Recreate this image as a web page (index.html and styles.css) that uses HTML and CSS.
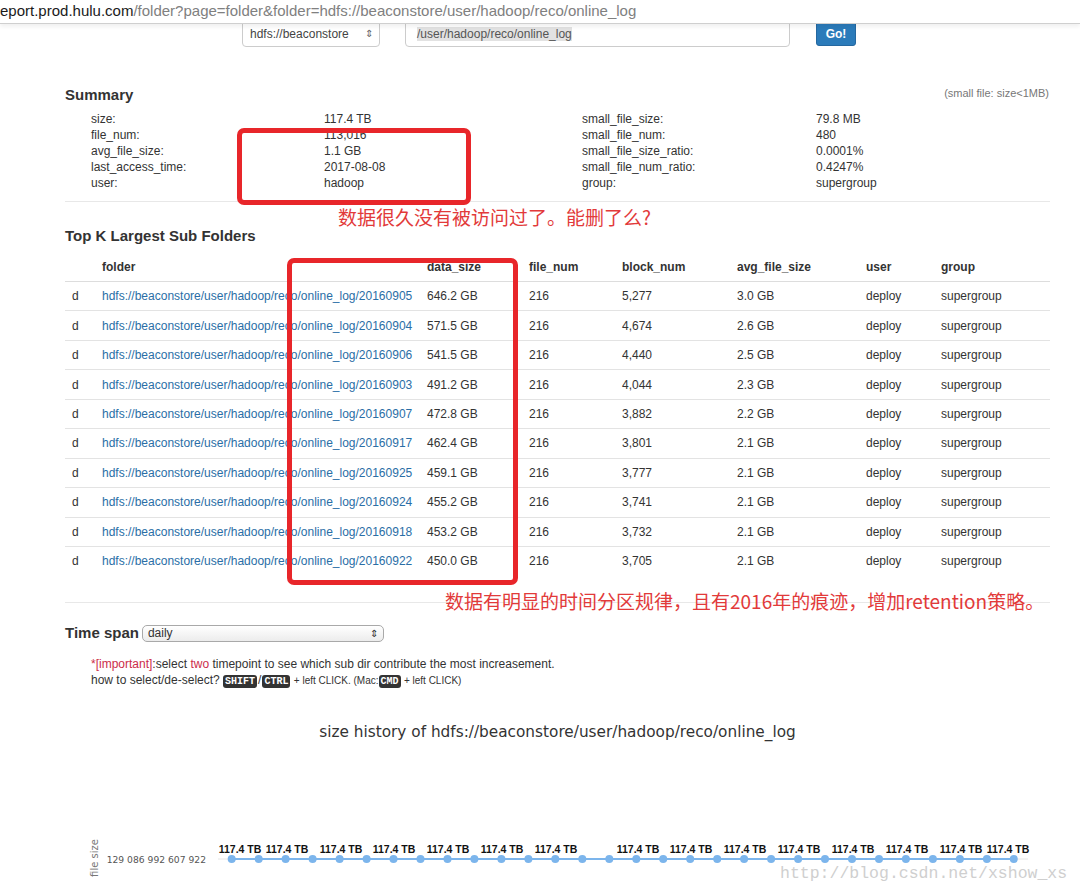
FILE: index.html
```html
<!DOCTYPE html>
<html>
<head>
<meta charset="utf-8">
<link rel="stylesheet" href="styles.css">
</head>
<body>
<div class="page">
  <div class="urlbar"><span class="host">eport.prod.hulu.com</span><span class="path">/folder?page=folder&amp;folder=hdfs://beaconstore/user/hadoop/reco/online_log</span></div>
  <div class="formrow">
    <div class="formrow-inner">
      <div class="fs-select"><span>hdfs://beaconstore</span><span class="updown">⇕</span></div>
      <div class="fs-input"><span class="sel">/user/hadoop/reco/online_log</span></div>
      <div class="go-btn">Go!</div>
    </div>
  </div>

  <div class="main">
    <div class="summary-head">
      <h2 class="section-title">Summary</h2>
      <span class="note">(small file: size&lt;1MB)</span>
    </div>
    <div class="summary-grid">
      <span>size:</span><span>117.4 TB</span><span>small_file_size:</span><span>79.8 MB</span>
      <span>file_num:</span><span>113,016</span><span>small_file_num:</span><span>480</span>
      <span>avg_file_size:</span><span>1.1 GB</span><span>small_file_size_ratio:</span><span>0.0001%</span>
      <span>last_access_time:</span><span>2017-08-08</span><span>small_file_num_ratio:</span><span>0.4247%</span>
      <span>user:</span><span>hadoop</span><span>group:</span><span>supergroup</span>
    </div>
    <div class="rule rule-1"></div>

    <h2 class="section-title topk">Top K Largest Sub Folders</h2>
    <table class="folders">
      <colgroup>
        <col class="c1"><col class="c2"><col class="c3"><col class="c4"><col class="c5"><col class="c6"><col class="c7"><col class="c8">
      </colgroup>
      <thead>
        <tr><th></th><th>folder</th><th>data_size</th><th>file_num</th><th>block_num</th><th>avg_file_size</th><th>user</th><th>group</th></tr>
      </thead>
      <tbody>
        <tr><td>d</td><td><a>hdfs://beaconstore/user/hadoop/reco/online_log/20160905</a></td><td>646.2 GB</td><td>216</td><td>5,277</td><td>3.0 GB</td><td>deploy</td><td>supergroup</td></tr>
        <tr><td>d</td><td><a>hdfs://beaconstore/user/hadoop/reco/online_log/20160904</a></td><td>571.5 GB</td><td>216</td><td>4,674</td><td>2.6 GB</td><td>deploy</td><td>supergroup</td></tr>
        <tr><td>d</td><td><a>hdfs://beaconstore/user/hadoop/reco/online_log/20160906</a></td><td>541.5 GB</td><td>216</td><td>4,440</td><td>2.5 GB</td><td>deploy</td><td>supergroup</td></tr>
        <tr><td>d</td><td><a>hdfs://beaconstore/user/hadoop/reco/online_log/20160903</a></td><td>491.2 GB</td><td>216</td><td>4,044</td><td>2.3 GB</td><td>deploy</td><td>supergroup</td></tr>
        <tr><td>d</td><td><a>hdfs://beaconstore/user/hadoop/reco/online_log/20160907</a></td><td>472.8 GB</td><td>216</td><td>3,882</td><td>2.2 GB</td><td>deploy</td><td>supergroup</td></tr>
        <tr><td>d</td><td><a>hdfs://beaconstore/user/hadoop/reco/online_log/20160917</a></td><td>462.4 GB</td><td>216</td><td>3,801</td><td>2.1 GB</td><td>deploy</td><td>supergroup</td></tr>
        <tr><td>d</td><td><a>hdfs://beaconstore/user/hadoop/reco/online_log/20160925</a></td><td>459.1 GB</td><td>216</td><td>3,777</td><td>2.1 GB</td><td>deploy</td><td>supergroup</td></tr>
        <tr><td>d</td><td><a>hdfs://beaconstore/user/hadoop/reco/online_log/20160924</a></td><td>455.2 GB</td><td>216</td><td>3,741</td><td>2.1 GB</td><td>deploy</td><td>supergroup</td></tr>
        <tr><td>d</td><td><a>hdfs://beaconstore/user/hadoop/reco/online_log/20160918</a></td><td>453.2 GB</td><td>216</td><td>3,732</td><td>2.1 GB</td><td>deploy</td><td>supergroup</td></tr>
        <tr><td>d</td><td><a>hdfs://beaconstore/user/hadoop/reco/online_log/20160922</a></td><td>450.0 GB</td><td>216</td><td>3,705</td><td>2.1 GB</td><td>deploy</td><td>supergroup</td></tr>
      </tbody>
    </table>
    <div class="rule rule-2"></div>

    <div class="timespan">
      <h2 class="section-title">Time span</h2>
      <div class="ts-select"><span>daily</span><span class="updown">⇕</span></div>
    </div>
    <div class="help">
      <div><span class="imp">*[important]</span>:select <span class="imp">two</span> timepoint to see which sub dir contribute the most increasement.</div>
      <div>how to select/de-select? <kbd>SHIFT</kbd><span class="slash">/</span><kbd>CTRL</kbd> <small>+ left CLICK. (Mac:</small><kbd>CMD</kbd> <small>+ left CLICK)</small></div>
    </div>
  </div>

  <div class="chart">
    <div class="chart-title">size history of hdfs://beaconstore/user/hadoop/reco/online_log</div>
    <svg class="chart-svg" width="1080" height="150" viewBox="0 0 1080 150">
      <line x1="218" y1="117" x2="1028" y2="117" stroke="#e6e6e6" stroke-width="1"/>
      <text class="axis-title" transform="translate(98 116) rotate(-90)" text-anchor="middle">file size</text>
      <text class="axis-label" x="206" y="121" text-anchor="end">129 086 992 607 922</text>
      <line x1="231.7" y1="117" x2="1013.8" y2="117" stroke="#7cb5ec" stroke-width="2"/>
      <g fill="#7cb5ec">
        <circle cx="231.7" cy="117" r="4"/><circle cx="258.7" cy="117" r="4"/><circle cx="285.6" cy="117" r="4"/><circle cx="312.6" cy="117" r="4"/><circle cx="339.6" cy="117" r="4"/>
        <circle cx="366.6" cy="117" r="4"/><circle cx="393.5" cy="117" r="4"/><circle cx="420.5" cy="117" r="4"/><circle cx="447.5" cy="117" r="4"/><circle cx="474.4" cy="117" r="4"/>
        <circle cx="501.4" cy="117" r="4"/><circle cx="528.4" cy="117" r="4"/><circle cx="555.3" cy="117" r="4"/><circle cx="582.3" cy="117" r="4"/><circle cx="609.3" cy="117" r="4"/>
        <circle cx="636.3" cy="117" r="4"/><circle cx="663.2" cy="117" r="4"/><circle cx="690.2" cy="117" r="4"/><circle cx="717.2" cy="117" r="4"/><circle cx="744.1" cy="117" r="4"/>
        <circle cx="771.1" cy="117" r="4"/><circle cx="798.1" cy="117" r="4"/><circle cx="825.0" cy="117" r="4"/><circle cx="852.0" cy="117" r="4"/><circle cx="879.0" cy="117" r="4"/>
        <circle cx="905.9" cy="117" r="4"/><circle cx="932.9" cy="117" r="4"/><circle cx="959.9" cy="117" r="4"/><circle cx="986.9" cy="117" r="4"/><circle cx="1013.8" cy="117" r="4"/>
      </g>
      <g class="point-label" text-anchor="middle">
        <text x="240" y="111">117.4 TB</text><text x="287" y="111">117.4 TB</text><text x="341" y="111">117.4 TB</text>
        <text x="394" y="111">117.4 TB</text><text x="448" y="111">117.4 TB</text><text x="502" y="111">117.4 TB</text>
        <text x="556" y="111">117.4 TB</text><text x="638" y="111">117.4 TB</text><text x="691" y="111">117.4 TB</text>
        <text x="745" y="111">117.4 TB</text><text x="799" y="111">117.4 TB</text><text x="853" y="111">117.4 TB</text>
        <text x="907" y="111">117.4 TB</text><text x="961" y="111">117.4 TB</text><text x="1008" y="111">117.4 TB</text>
      </g>
      <text class="watermark" x="780" y="136">http://blog.csdn.net/xshow_xs</text>
    </svg>
  </div>

  <div class="mark mark-1"></div>
  <div class="mark mark-2"></div>
  <div class="callout callout-1">数据很久没有被访问过了。能删了么?</div>
  <div class="callout callout-2">数据有明显的时间分区规律，且有2016年的痕迹，增加retention策略。</div>
</div>
</body>
</html>
```

FILE: styles.css
```css
html, body {
  margin: 0;
  padding: 0;
  background: #fff;
}
body {
  font-family: "Liberation Sans", Arial, sans-serif;
  color: #333;
  width: 1080px;
  height: 891px;
  overflow: hidden;
}
.page {
  position: relative;
  width: 1080px;
  height: 891px;
}

/* browser url bar */
.urlbar {
  position: relative;
  z-index: 2;
  box-sizing: border-box;
  height: 24px;
  border-bottom: 1px solid #cfcfcf;
  background: #fff;
  font-size: 15px;
  line-height: 21px;
  white-space: nowrap;
  box-shadow: 0 3px 4px rgba(0, 0, 0, 0.06);
}
.urlbar .host { color: #1a1a1a; }
.urlbar .path { color: #808080; }

/* top form row (cut off) */
.formrow {
  position: relative;
  z-index: 1;
  height: 24px;
  overflow: hidden;
}
.formrow-inner {
  display: flex;
  align-items: flex-start;
  margin-top: -7px;
  padding-left: 242px;
  font-size: 12px;
}
.fs-select {
  box-sizing: border-box;
  width: 138px;
  height: 30px;
  border: 1px solid #ccc;
  border-radius: 4px;
  padding: 9px 6px 0 7px;
  line-height: 14px;
  display: flex;
  justify-content: space-between;
  color: #444;
}
.updown { font-size: 10px; color: #666; }
.fs-input {
  box-sizing: border-box;
  width: 385px;
  height: 30px;
  margin-left: 25px;
  border: 1px solid #ccc;
  border-radius: 4px;
  padding: 9px 0 0 11px;
  line-height: 14px;
  color: #555;
}
.fs-input .sel { background: #e2e2e2; }
.go-btn {
  box-sizing: border-box;
  width: 40px;
  height: 29px;
  margin-left: 26px;
  background: #2b7bba;
  border: 1px solid #2568a0;
  border-radius: 3px;
  color: #fff;
  font-weight: bold;
  font-size: 12px;
  line-height: 14px;
  padding-top: 9px;
  text-align: center;
}

/* main column */
.main {
  padding: 0 30px 0 65px;
}
.section-title {
  margin: 0;
  font-size: 15px;
  line-height: 18px;
  font-weight: bold;
  color: #333;
}
.summary-head {
  display: flex;
  justify-content: space-between;
  align-items: flex-start;
  margin-top: 38px;
}
.summary-head .note {
  font-size: 11px;
  color: #777;
  line-height: 14px;
  margin-top: 0;
  margin-right: 1px;
}
.summary-grid {
  display: grid;
  grid-template-columns: 233px 258px 234px auto;
  padding-left: 26px;
  margin-top: 7px;
  font-size: 12px;
  line-height: 16px;
  color: #333;
}
.rule {
  height: 1px;
  background: #e8e8e8;
}
.rule-1 { margin-top: 10px; }
.topk { margin-top: 25px; }

/* table */
.folders {
  margin-top: 8px;
  width: 985px;
  table-layout: fixed;
  border-collapse: collapse;
  font-size: 12px;
}
.c1 { width: 30px; }
.c2 { width: 325px; }
.c3 { width: 102px; }
.c4 { width: 93px; }
.c5 { width: 115px; }
.c6 { width: 129px; }
.c7 { width: 75px; }
.c8 { width: 116px; }
.folders th {
  text-align: left;
  font-weight: bold;
  height: 28px;
  padding: 0 7px;
  border-bottom: 1px solid #ddd;
  white-space: nowrap;
}
.folders td {
  height: 28.44px;
  padding: 0 7px;
  border-top: 1px solid #e3e3e3;
  white-space: nowrap;
  overflow: visible;
}
.folders a {
  color: #2a6ea6;
  text-decoration: none;
}
.rule-2 { margin-top: 27px; }

/* time span */
.timespan {
  display: flex;
  align-items: center;
  margin-top: 21px;
  height: 18px;
}
.ts-select {
  box-sizing: border-box;
  width: 242px;
  height: 17px;
  margin-left: 3px;
  border: 1px solid #a9a9a9;
  border-radius: 5px;
  background: linear-gradient(#ffffff, #ececec);
  display: flex;
  justify-content: space-between;
  align-items: center;
  padding: 0 5px 0 5px;
  font-size: 12px;
  color: #333;
}
.ts-select .updown { font-size: 10px; color: #333; }
.help {
  margin-top: 14px;
  padding-left: 26px;
  font-size: 12px;
  line-height: 16px;
  color: #333;
}
.imp { color: #cc2d4a; }
.help kbd {
  display: inline-block;
  background: #333;
  color: #fff;
  font-family: "Liberation Mono", monospace;
  font-weight: bold;
  font-size: 10px;
  line-height: 13px;
  padding: 0 2px;
  border-radius: 3px;
  vertical-align: middle;
}
.help small { font-size: 10px; }
.slash { margin: 0 1px; }

/* chart */
.chart {
  margin-top: 33px;
}
.chart-title {
  padding-left: 35px;
  text-align: center;
  font-family: "DejaVu Sans", sans-serif;
  font-size: 15.3px;
  line-height: 20px;
  color: #333;
}
.chart-svg { display: block; }
.axis-title {
  font-family: "DejaVu Sans", sans-serif;
  font-size: 10px;
  fill: #777;
}
.axis-label {
  font-family: "DejaVu Sans", sans-serif;
  font-size: 9.2px;
  fill: #555;
}
.point-label text {
  font-family: "Liberation Sans", Arial, sans-serif;
  font-weight: bold;
  font-size: 10.5px;
  fill: #111;
}
.watermark {
  font-family: "Liberation Mono", monospace;
  font-size: 16.5px;
  fill: #cfcfcf;
}

/* annotations */
.mark {
  position: absolute;
  box-sizing: border-box;
  border: 5px solid #e8262a;
  border-radius: 7px;
}
.mark-1 { left: 237px; top: 128px; width: 234px; height: 77px; }
.mark-2 { left: 287px; top: 258px; width: 231px; height: 327px; }
.callout {
  position: absolute;
  font-family: "Noto Sans CJK SC", sans-serif;
  font-size: 19px;
  line-height: 22px;
  color: #e23a3a;
  white-space: nowrap;
}
.callout-1 { left: 338px; top: 206px; }
.callout-2 { left: 445px; top: 590px; }
```
